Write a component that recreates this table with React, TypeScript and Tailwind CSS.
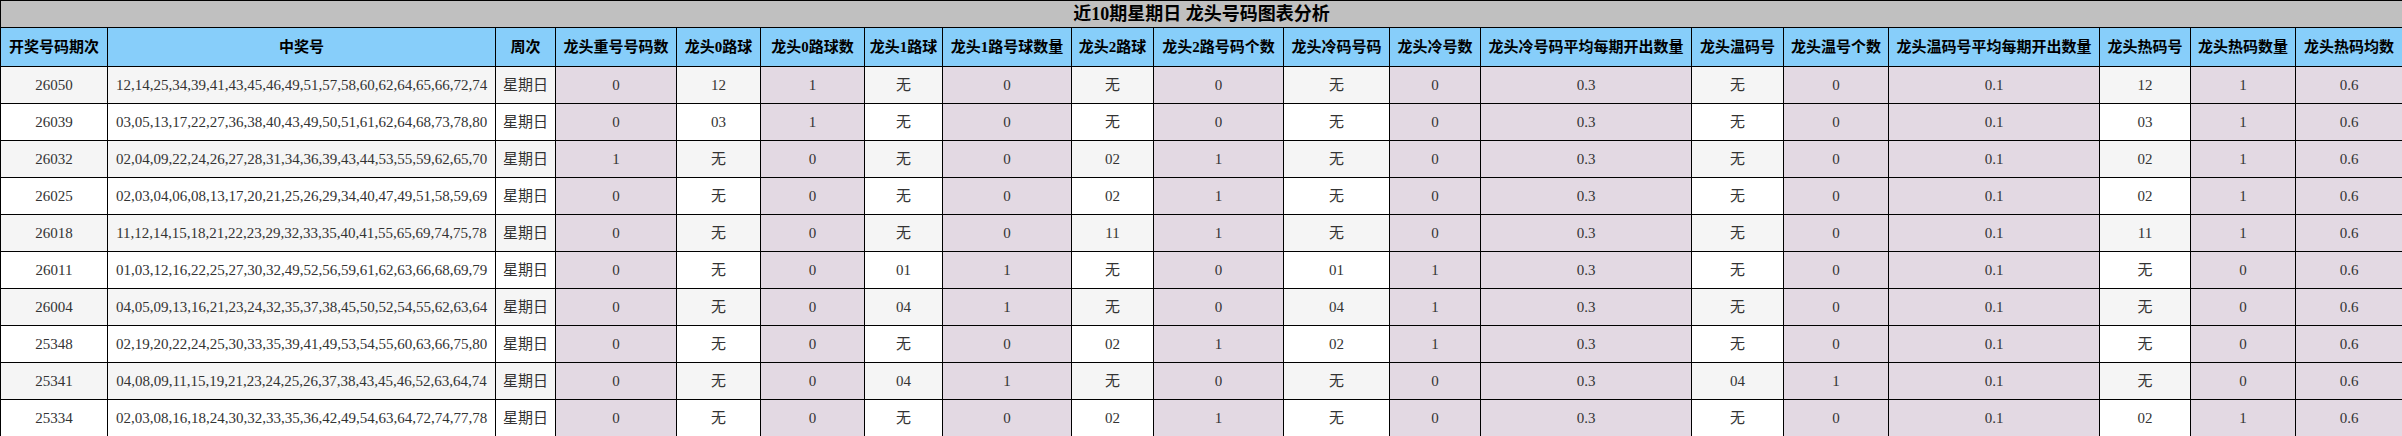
import React from 'react';

// column widths measured off the reference (px, total 2402)
const columns = [
  { title: '开奖号码期次', width: 107, shade: false },
  { title: '中奖号', width: 388, shade: false },
  { title: '周次', width: 60, shade: false },
  { title: '龙头重号号码数', width: 121, shade: true },
  { title: '龙头0路球', width: 84, shade: false },
  { title: '龙头0路球数', width: 104, shade: true },
  { title: '龙头1路球', width: 78, shade: false },
  { title: '龙头1路号球数量', width: 129, shade: true },
  { title: '龙头2路球', width: 82, shade: false },
  { title: '龙头2路号码个数', width: 130, shade: true },
  { title: '龙头冷码号码', width: 106, shade: false },
  { title: '龙头冷号数', width: 91, shade: true },
  { title: '龙头冷号码平均每期开出数量', width: 211, shade: true },
  { title: '龙头温码号', width: 92, shade: false },
  { title: '龙头温号个数', width: 105, shade: true },
  { title: '龙头温码号平均每期开出数量', width: 211, shade: true },
  { title: '龙头热码号', width: 91, shade: false },
  { title: '龙头热码数量', width: 105, shade: true },
  { title: '龙头热码均数', width: 107, shade: true },
];

const rows: string[][] = [
  ['26050', '12,14,25,34,39,41,43,45,46,49,51,57,58,60,62,64,65,66,72,74', '星期日', '0', '12', '1', '无', '0', '无', '0', '无', '0', '0.3', '无', '0', '0.1', '12', '1', '0.6'],
  ['26039', '03,05,13,17,22,27,36,38,40,43,49,50,51,61,62,64,68,73,78,80', '星期日', '0', '03', '1', '无', '0', '无', '0', '无', '0', '0.3', '无', '0', '0.1', '03', '1', '0.6'],
  ['26032', '02,04,09,22,24,26,27,28,31,34,36,39,43,44,53,55,59,62,65,70', '星期日', '1', '无', '0', '无', '0', '02', '1', '无', '0', '0.3', '无', '0', '0.1', '02', '1', '0.6'],
  ['26025', '02,03,04,06,08,13,17,20,21,25,26,29,34,40,47,49,51,58,59,69', '星期日', '0', '无', '0', '无', '0', '02', '1', '无', '0', '0.3', '无', '0', '0.1', '02', '1', '0.6'],
  ['26018', '11,12,14,15,18,21,22,23,29,32,33,35,40,41,55,65,69,74,75,78', '星期日', '0', '无', '0', '无', '0', '11', '1', '无', '0', '0.3', '无', '0', '0.1', '11', '1', '0.6'],
  ['26011', '01,03,12,16,22,25,27,30,32,49,52,56,59,61,62,63,66,68,69,79', '星期日', '0', '无', '0', '01', '1', '无', '0', '01', '1', '0.3', '无', '0', '0.1', '无', '0', '0.6'],
  ['26004', '04,05,09,13,16,21,23,24,32,35,37,38,45,50,52,54,55,62,63,64', '星期日', '0', '无', '0', '04', '1', '无', '0', '04', '1', '0.3', '无', '0', '0.1', '无', '0', '0.6'],
  ['25348', '02,19,20,22,24,25,30,33,35,39,41,49,53,54,55,60,63,66,75,80', '星期日', '0', '无', '0', '无', '0', '02', '1', '02', '1', '0.3', '无', '0', '0.1', '无', '0', '0.6'],
  ['25341', '04,08,09,11,15,19,21,23,24,25,26,37,38,43,45,46,52,63,64,74', '星期日', '0', '无', '0', '04', '1', '无', '0', '无', '0', '0.3', '04', '1', '0.1', '无', '0', '0.6'],
  ['25334', '02,03,08,16,18,24,30,32,33,35,36,42,49,54,63,64,72,74,77,78', '星期日', '0', '无', '0', '无', '0', '02', '1', '无', '0', '0.3', '无', '0', '0.1', '02', '1', '0.6'],
];

export default function App() {
  return (
    <div className="w-[2402px] bg-white font-['Liberation_Serif','Noto_Sans_CJK_SC',serif]">
      <table className="w-full table-fixed border-collapse">
        <colgroup>
          {columns.map((c) => (
            <col key={c.title} style={{ width: c.width }} />
          ))}
        </colgroup>
        <thead>
          <tr className="h-[27px]">
            <th
              colSpan={columns.length}
              className="border border-black bg-[#c0c0c0] p-0 text-center text-[18px] font-bold leading-none text-black"
            >
              近10期星期日 龙头号码图表分析
            </th>
          </tr>
          <tr className="h-[39px]">
            {columns.map((c) => (
              <th
                key={c.title}
                className="border border-black bg-[#87cefa] px-1 py-0 text-center text-[15px] font-bold leading-none whitespace-nowrap text-black"
              >
                {c.title}
              </th>
            ))}
          </tr>
        </thead>
        <tbody>
          {rows.map((r, ri) => (
            <tr key={r[0]} className="h-[37px]">
              {r.map((v, ci) => (
                <td
                  key={ci}
                  className={`border border-black px-1 py-0 text-center text-[15px] leading-none whitespace-nowrap text-[#333] ${
                    columns[ci].shade ? 'bg-[#e3d9e3]' : ri % 2 === 0 ? 'bg-[#f5f5f5]' : 'bg-white'
                  }`}
                >
                  {v}
                </td>
              ))}
            </tr>
          ))}
        </tbody>
      </table>
    </div>
  );
}
